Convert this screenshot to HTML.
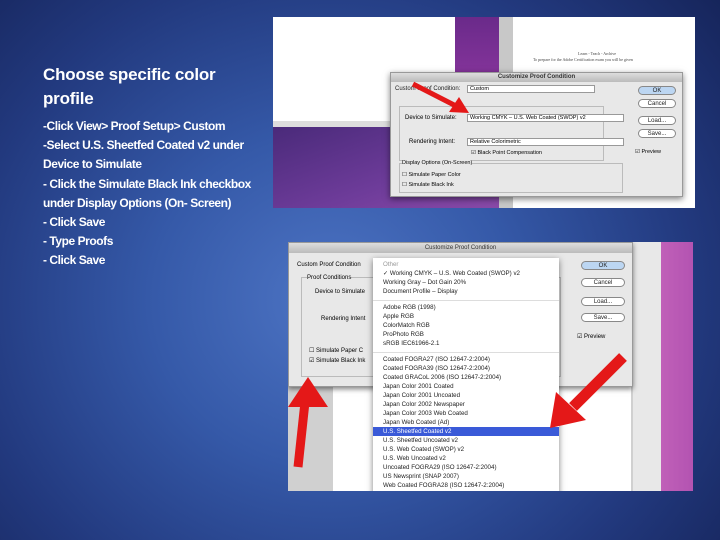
<!DOCTYPE html>
<html><head><meta charset="utf-8"><style>
*{margin:0;padding:0;box-sizing:border-box}
body{width:720px;height:540px;overflow:hidden;position:relative;font-family:"Liberation Sans",sans-serif;
background:radial-gradient(ellipse 520px 480px at 330px 300px,#4d74c4 0%,#3559a8 35%,#22397e 70%,#152358 100%);}
.t{position:absolute;color:#fff;font-weight:bold}
.title{left:43px;top:63px;font-size:17px;line-height:24px;letter-spacing:-0.2px}
.body{left:43px;top:117px;font-size:12px;line-height:19.2px;letter-spacing:-0.45px}
.abs{position:absolute}
.btn{position:absolute;background:#fff;border:1px solid #888;border-radius:8px;font-size:6px;text-align:center;color:#222;line-height:8px;height:9px;width:38px}
.menu div{font-size:6.2px;line-height:9px;padding-left:10px;color:#222;white-space:nowrap}
</style></head><body>
<div class="t title">Choose specific color<br>profile</div>
<div class="t body">-Click View&gt; Proof Setup&gt; Custom<br>-Select U.S. Sheetfed Coated v2 under<br>Device to Simulate<br>- Click the Simulate Black Ink checkbox<br>under Display Options (On- Screen)<br>- Click Save<br>- Type Proofs<br>- Click Save</div>

<!-- screenshot 1 -->
<div class="abs" style="left:273px;top:17px;width:422px;height:191px;background:#fff;overflow:hidden">
 <div class="abs" style="left:182px;top:0;width:44px;height:108px;background:linear-gradient(#6a2a8a,#9a3ca8)"></div>
 <div class="abs" style="left:0;top:104px;width:226px;height:6px;background:#ddd"></div>
 <div class="abs" style="left:0;top:110px;width:226px;height:82px;background:linear-gradient(160deg,#4a2a7a,#6e3c9a 60%,#8a4aa8)"></div>
 <div class="abs" style="left:226px;top:0;width:14px;height:192px;background:#c8c8c8"></div>
 <div class="abs" style="left:260px;top:34px;font-size:4px;color:#444;font-family:'Liberation Serif',serif;line-height:6px;width:160px">&nbsp;&nbsp;&nbsp;&nbsp;&nbsp;&nbsp;&nbsp;&nbsp;&nbsp;&nbsp;&nbsp;&nbsp;&nbsp;&nbsp;&nbsp;&nbsp;&nbsp;&nbsp;&nbsp;&nbsp;&nbsp;&nbsp;&nbsp;&nbsp;&nbsp;&nbsp;&nbsp;&nbsp;&nbsp;&nbsp;&nbsp;&nbsp;&nbsp;&nbsp;&nbsp;&nbsp;&nbsp;&nbsp;&nbsp;&nbsp;&nbsp;&nbsp;&nbsp;&nbsp;&nbsp;Learn - Teach - Archive<br>To prepare for the Adobe Certification exam you will be given</div>
 <div class="abs" style="left:117px;top:55px;width:293px;height:125px;background:#e8e8e8;border:1px solid #999;box-shadow:0 2px 6px rgba(0,0,0,.5)">
  <div style="height:9px;background:linear-gradient(#ddd,#bbb);font-size:6px;text-align:center;line-height:9px;color:#333;font-weight:bold">Customize Proof Condition</div>
  <div class="abs" style="left:4px;top:13px;font-size:6px;color:#222">Custom Proof Condition:</div>
  <div class="abs" style="left:76px;top:12px;width:128px;height:8px;background:#fff;border:1px solid #999;font-size:5.5px;line-height:7px;padding-left:2px">Custom</div>
  <div class="abs" style="left:8px;top:33px;width:205px;height:55px;border:1px solid #bbb"></div>
  <div class="abs" style="left:14px;top:42px;font-size:6px">Device to Simulate:</div>
  <div class="abs" style="left:76px;top:41px;width:157px;height:8px;background:#fff;border:1px solid #999;font-size:5.5px;line-height:7px;padding-left:2px">Working CMYK – U.S. Web Coated (SWOP) v2</div>
  <div class="abs" style="left:18px;top:66px;font-size:6px">Rendering Intent:</div>
  <div class="abs" style="left:76px;top:65px;width:157px;height:8px;background:#fff;border:1px solid #999;font-size:5.5px;line-height:7px;padding-left:2px">Relative Colorimetric</div>
  <div class="abs" style="left:80px;top:77px;font-size:5.5px">☑ Black Point Compensation</div>
  <div class="abs" style="left:8px;top:90px;width:224px;height:30px;border:1px solid #bbb"></div>
  <div class="abs" style="left:11px;top:87px;font-size:5.5px;background:#e8e8e8">Display Options (On-Screen)</div>
  <div class="abs" style="left:11px;top:97px;font-size:5.5px;line-height:10px">☐ Simulate Paper Color<br>☐ Simulate Black Ink</div>
  <div class="btn" style="left:247px;top:13px;background:#bcd6f2">OK</div>
  <div class="btn" style="left:247px;top:26px">Cancel</div>
  <div class="btn" style="left:247px;top:43px">Load...</div>
  <div class="btn" style="left:247px;top:56px">Save...</div>
  <div class="abs" style="left:244px;top:76px;font-size:5.5px">☑ Preview</div>
 </div>
 <svg class="abs" style="left:0;top:0" width="422" height="191"><path d="M140 67 L185 90" stroke="#e41818" stroke-width="5"/><polygon points="196,96 176,95 186,80" fill="#e41818"/></svg>
</div>

<!-- screenshot 2 -->
<div class="abs" style="left:288px;top:242px;width:405px;height:249px;background:#d0d0d0;overflow:hidden">
 <div class="abs" style="left:373px;top:0;width:40px;height:249px;background:linear-gradient(90deg,#c060b8,#b050b0)"></div>
 <div class="abs" style="left:345px;top:0;width:28px;height:249px;background:#e8e8e8"></div>
 <div class="abs" style="left:45px;top:145px;width:298px;height:110px;background:#fff"></div>
 <div class="abs" style="left:0;top:0;width:345px;height:145px;background:#e8e8e8;border:1px solid #999;box-shadow:0 2px 5px rgba(0,0,0,.5)">
  <div style="height:10px;background:linear-gradient(#ddd,#bbb);font-size:6px;text-align:center;line-height:10px;color:#333">Customize Proof Condition</div>
  <div class="abs" style="left:8px;top:19px;font-size:6px">Custom Proof Condition</div>
  <div class="abs" style="left:12px;top:34px;width:260px;height:100px;border:1px solid #bbb"></div>
  <div class="abs" style="left:18px;top:32px;font-size:6px;background:#e8e8e8">Proof Conditions</div>
  <div class="abs" style="left:26px;top:46px;font-size:6px">Device to Simulate</div>
  <div class="abs" style="left:32px;top:73px;font-size:6px">Rendering Intent</div>
  <div class="abs" style="left:20px;top:103px;font-size:6px;line-height:10px">☐ Simulate Paper C<br>☑ Simulate Black Ink</div>
  <div class="btn" style="left:292px;top:18px;width:44px;background:#bcd6f2">OK</div>
  <div class="btn" style="left:292px;top:35px;width:44px">Cancel</div>
  <div class="btn" style="left:292px;top:54px;width:44px">Load...</div>
  <div class="btn" style="left:292px;top:70px;width:44px">Save...</div>
  <div class="abs" style="left:288px;top:90px;font-size:6px">☑ Preview</div>
 </div>
 <div class="abs menu" style="left:85px;top:16px;width:186px;height:240px;background:#fff;box-shadow:0 2px 6px rgba(0,0,0,.5);padding-top:2px">
  <div style="color:#999">Other</div><div>✓ Working CMYK – U.S. Web Coated (SWOP) v2</div><div>Working Gray – Dot Gain 20%</div><div>Document Profile – Display</div>
  <div style="height:5px;border-bottom:1px solid #ddd;margin-bottom:2px"></div>
  <div>Adobe RGB (1998)</div><div>Apple RGB</div><div>ColorMatch RGB</div><div>ProPhoto RGB</div><div>sRGB IEC61966-2.1</div>
  <div style="height:5px;border-bottom:1px solid #ddd;margin-bottom:2px"></div>
  <div>Coated FOGRA27 (ISO 12647-2:2004)</div><div>Coated FOGRA39 (ISO 12647-2:2004)</div><div>Coated GRACoL 2006 (ISO 12647-2:2004)</div><div>Japan Color 2001 Coated</div><div>Japan Color 2001 Uncoated</div><div>Japan Color 2002 Newspaper</div><div>Japan Color 2003 Web Coated</div><div>Japan Web Coated (Ad)</div>
  <div style="background:#3a5ad8;color:#fff">U.S. Sheetfed Coated v2</div>
  <div>U.S. Sheetfed Uncoated v2</div><div>U.S. Web Coated (SWOP) v2</div><div>U.S. Web Uncoated v2</div><div>Uncoated FOGRA29 (ISO 12647-2:2004)</div><div>US Newsprint (SNAP 2007)</div><div>Web Coated FOGRA28 (ISO 12647-2:2004)</div>
 </div>
 <svg class="abs" style="left:0;top:0" width="405" height="249"><path d="M10 225 L17 160" stroke="#e41818" stroke-width="9"/><polygon points="20,135 0,165 40,165" fill="#e41818"/><path d="M335 115 L285 165" stroke="#e41818" stroke-width="11"/><polygon points="262,186 268,150 298,178" fill="#e41818"/></svg>
</div>
</body></html>
